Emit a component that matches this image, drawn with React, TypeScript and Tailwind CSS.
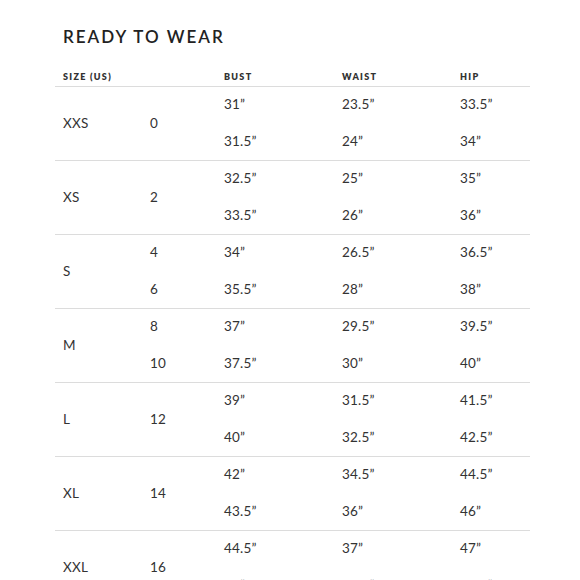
import React from "react";

type Group = { label: string; sizes: string[]; bust: [string, string]; waist: [string, string]; hip: [string, string] };

const groups: Group[] = [
  { label: "XXS", sizes: ["0"], bust: ["31”", "31.5”"], waist: ["23.5”", "24”"], hip: ["33.5”", "34”"] },
  { label: "XS", sizes: ["2"], bust: ["32.5”", "33.5”"], waist: ["25”", "26”"], hip: ["35”", "36”"] },
  { label: "S", sizes: ["4", "6"], bust: ["34”", "35.5”"], waist: ["26.5”", "28”"], hip: ["36.5”", "38”"] },
  { label: "M", sizes: ["8", "10"], bust: ["37”", "37.5”"], waist: ["29.5”", "30”"], hip: ["39.5”", "40”"] },
  { label: "L", sizes: ["12"], bust: ["39”", "40”"], waist: ["31.5”", "32.5”"], hip: ["41.5”", "42.5”"] },
  { label: "XL", sizes: ["14"], bust: ["42”", "43.5”"], waist: ["34.5”", "36”"], hip: ["44.5”", "46”"] },
  { label: "XXL", sizes: ["16"], bust: ["44.5”", "46”"], waist: ["37”", "38.5”"], hip: ["47”", "48.5”"] },
];

function GroupRow({ g }: { g: Group }) {
  return (
    <div className="grid grid-cols-[87px_74px_118px_118px_1fr] grid-rows-[35px_38px] pl-2 border-b border-[#dcdcdc] text-[13.5px] text-[#333] tracking-[0.2px]">
      <div className="row-span-2 flex items-center">{g.label}</div>
      {g.sizes.length === 1 ? (
        <div className="row-span-2 col-start-2 row-start-1 flex items-center">{g.sizes[0]}</div>
      ) : (
        <>
          <div className="col-start-2 row-start-1 flex items-center">{g.sizes[0]}</div>
          <div className="col-start-2 row-start-2 flex items-center">{g.sizes[1]}</div>
        </>
      )}
      <div className="col-start-3 row-start-1 flex items-center">{g.bust[0]}</div>
      <div className="col-start-4 row-start-1 flex items-center">{g.waist[0]}</div>
      <div className="col-start-5 row-start-1 flex items-center">{g.hip[0]}</div>
      <div className="col-start-3 row-start-2 flex items-center">{g.bust[1]}</div>
      <div className="col-start-4 row-start-2 flex items-center">{g.waist[1]}</div>
      <div className="col-start-5 row-start-2 flex items-center">{g.hip[1]}</div>
    </div>
  );
}

export default function App() {
  return (
    <div className="w-[580px] h-[580px] overflow-hidden bg-white font-['Lato',sans-serif]">
      <div className="ml-[55px] w-[475px] pt-[25px]">
        <h1 className="pl-2 h-[24px] leading-[24px] text-[17px] font-semibold tracking-[2px] text-[#222]">
          READY TO WEAR
        </h1>
        <div className="mt-[18px] grid grid-cols-[87px_74px_118px_118px_1fr] h-[20px] items-center pl-2 border-b border-[#dcdcdc] text-[9px] font-extrabold tracking-[1.3px] text-[#333]">
          <div className="col-span-2">SIZE (US)</div>
          <div>BUST</div>
          <div>WAIST</div>
          <div>HIP</div>
        </div>
        {groups.map((g) => (
          <GroupRow key={g.label} g={g} />
        ))}
      </div>
    </div>
  );
}
